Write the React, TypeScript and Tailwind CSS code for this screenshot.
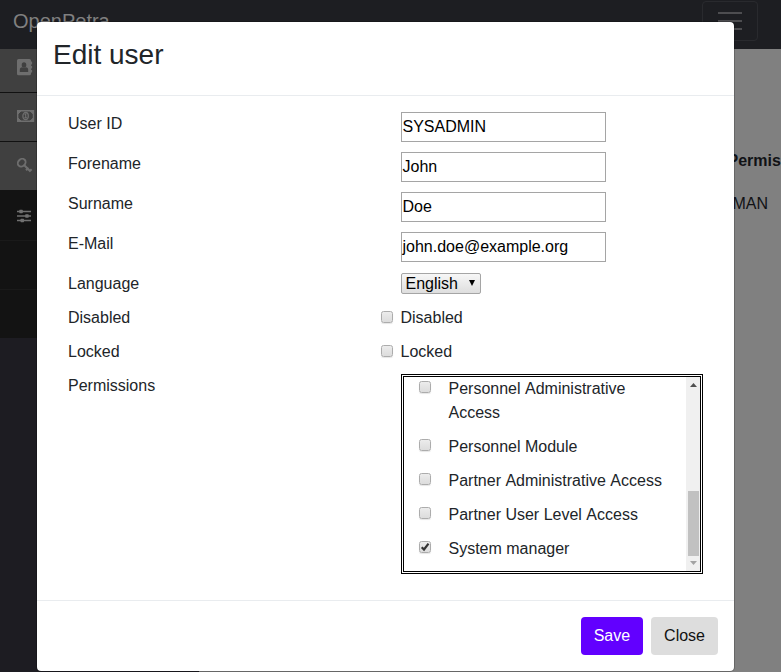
import React from "react";

function Check({ checked = false, className = "" }: { checked?: boolean; className?: string }) {
  return (
    <span
      className={`block size-3 shrink-0 rounded-[2.5px] border border-[#acacac] bg-linear-to-b from-[#ececec] to-[#dcdcdc] shadow-[0_1px_1px_rgba(0,0,0,0.1)] ${className}`}
    >
      {checked && (
        <svg viewBox="0 0 10 10" className="block size-[10px]">
          <path d="M1.7 5.2 4 7.5 8.5 1.6" fill="none" stroke="#333" strokeWidth="2.2" />
        </svg>
      )}
    </span>
  );
}

function BookIcon() {
  return (
    <svg width="16" height="17" viewBox="0 0 16 17">
      <path
        d="M1.6 0h10.8Q14 0 14 1.6V2.6h.6q.5 0 .5.5v1.8q0 .5-.5.5H14v1.3h.6q.5 0 .5.5V9q0 .5-.5.5H14v1.3h.6q.5 0 .5.5v1.8q0 .5-.5.5H14v1.1q0 1.6-1.6 1.6H1.6Q0 16.300 0 14.700V1.6Q0 0 1.6 0z"
        fill="#6e6e6e"
      />
      <ellipse cx="7" cy="6" rx="2.3" ry="2.700" fill="#404040" />
      <path d="M2.800 13v-2Q2.800 8.300 5.200 8.300q1.800 1 3.600 0Q11.200 8.300 11.200 11v2z" fill="#404040" />
    </svg>
  );
}

function MoneyIcon() {
  return (
    <svg width="18" height="12" viewBox="0 0 18 12" fill="none" stroke="#6e6e6e">
      <path d="M.7.7h15.800v10.600H.7z" strokeWidth="1.4" />
      <path d="M1 1h3L1 4zM16.200 1h-3l3 3zM1 11V8l3 3zM16.200 11V8l-3 3z" fill="#6e6e6e" />
      <ellipse cx="8.600" cy="6" rx="2.7" ry="3.500" strokeWidth="1.300" />
      <path d="M7.600 4.600l1.100-.7v3.900M7.300 7.800h2.700" strokeWidth="1.100" />
    </svg>
  );
}

function KeyIcon() {
  return (
    <svg width="16" height="16" viewBox="0 0 16 16" fill="none" stroke="#6e6e6e">
      <ellipse cx="4.700" cy="4.700" rx="4.200" ry="3.500" transform="rotate(-45 4.7 4.7)" strokeWidth="1.900" />
      <path d="M6.800 6.800 13.500 13.500M9 12.200l2.500-2.500M12.300 13.600l2.300-2.300" strokeWidth="2" />
    </svg>
  );
}

function SlidersIcon() {
  return (
    <svg width="14" height="14" viewBox="0 0 14 14" fill="#707070">
      <path d="M0 1.800h14v1.400H0zM0 6.300h14v1.400H0zM0 10.800h14v1.400H0z" />
      <rect x="2.300" y=".8" width="3.500" height="3.400" rx=".6" />
      <rect x="8.200" y="5.300" width="3.500" height="3.400" rx=".6" />
      <rect x="3.500" y="9.800" width="3.500" height="3.400" rx=".6" />
    </svg>
  );
}

const fields = [
  ["User ID", "SYSADMIN"],
  ["Forename", "John"],
  ["Surname", "Doe"],
  ["E-Mail", "john.doe@example.org"],
];

const permissions = [
  "Personnel Administrative Access",
  "Personnel Module",
  "Partner Administrative Access",
  "Partner User Level Access",
  "System manager",
];

function Backdrop() {
  return (
    <div className="flex h-full flex-col">
      <header className="flex h-[49px] shrink-0 items-start justify-between bg-[#1d1e22] pr-[23px] pl-[13px]">
        <span className="pt-[6px] text-[20px] leading-[30px] text-[#808080]">OpenPetra</span>
        <div className="mt-px flex h-10 w-14 flex-col items-center justify-center gap-[6px] rounded border border-[#292a2e]">
          <i className="h-0.5 w-6 bg-[#4d4d50]" />
          <i className="h-0.5 w-6 bg-[#4d4d50]" />
          <i className="h-0.5 w-6 bg-[#4d4d50]" />
        </div>
      </header>
      <div className="flex flex-1">
        <nav className="w-[199px] shrink-0 bg-[#1d1c22]">
          <div className="h-11 border-b border-[#111] bg-[#404040] pt-[10px] pl-[17px]"><BookIcon /></div>
          <div className="h-[49px] border-b border-[#111] bg-[#404040] pt-[17px] pl-[17px]"><MoneyIcon /></div>
          <div className="h-12 bg-[#404040] pt-4 pl-[17px]"><KeyIcon /></div>
          <div className="h-[51px] border-b border-[#1a1a1a] bg-[#131313] pt-[19px] pl-[17px]"><SlidersIcon /></div>
          <div className="h-[49px] border-b border-[#1a1a1a] bg-[#131313]" />
          <div className="h-12 bg-[#131313]" />
        </nav>
        <main className="flex min-w-0 flex-1 flex-col items-start overflow-hidden bg-[#808080] pt-[100px] pl-[528.5px] leading-6 whitespace-nowrap text-[#111215]">
          <span className="font-bold">Permissions</span>
          <span className="mt-[19px] pl-[5px]">MAN</span>
        </main>
      </div>
    </div>
  );
}

export default function App() {
  return (
    <div className="relative h-[672px] w-[781px] overflow-hidden font-['Liberation_Sans',Arial,sans-serif] text-base text-[#212529]">
      <Backdrop />
      <div
        role="dialog"
        className="absolute top-[21px] left-[36px] flex h-[651px] w-[699px] flex-col rounded-[5px] border border-black/20 bg-white bg-clip-padding"
      >
        <div className="h-[74px] shrink-0 border-b border-[#e9ecef] px-4 pt-[15px]">
          <h5 className="text-[28px] leading-[36px]">Edit user</h5>
        </div>
        <div className="flex h-[504px] shrink-0 flex-col pt-4 pl-[31px] leading-6">
          {fields.map(([label, value]) => (
            <div key={label} className="flex h-10">
              <label className="w-[333px]">{label}</label>
              <div className="h-[30px] w-[205px] border border-[#a5a5a5] pl-[0.5px] leading-7 text-black">{value}</div>
            </div>
          ))}
          <div className="flex h-[34px]">
            <label className="w-[333px]">Language</label>
            <div className="mt-px flex h-[21px] w-20 items-center justify-between rounded-[2px] border border-[#a5a5a5] bg-linear-to-b from-[#f7f7f7] to-[#dedede] pr-[5px] pl-[3.5px] leading-[19px] text-black">
              English
              <svg width="6" height="6" viewBox="0 0 6 6" className="-mt-px"><path d="M0 0h6L3 6z" /></svg>
            </div>
          </div>
          {["Disabled", "Locked"].map((label) => (
            <div key={label} className="flex h-[34px]">
              <label className="w-[313px]">{label}</label>
              <Check className="mt-[5px] mr-[7.5px]" />
              <span>{label}</span>
            </div>
          ))}
          <div className="flex">
            <label className="w-[333px]">Permissions</label>
            <div className="flex h-[200px] w-[302px] border-[3px] border-double border-black">
              <div className="flex flex-1 flex-col gap-[10px] pl-[15px] [font-kerning:none]">
                {permissions.map((label) => (
                  <div key={label} className="flex">
                    <Check checked={label === "System manager"} className="mt-1 mr-[17.5px]" />
                    <span className="w-[220px]">{label}</span>
                  </div>
                ))}
              </div>
              <div className="flex w-[14px] shrink-0 flex-col items-start bg-[#f0f0f0]">
                <svg width="7" height="4" viewBox="0 0 7 4" className="mt-[6px] ml-1"><path d="M0 4 3.5 0 7 4z" fill="#505050" /></svg>
                <div className="mt-[104px] ml-0.5 h-[65px] w-[11px] bg-[#c1c1c1]" />
                <svg width="7" height="4" viewBox="0 0 7 4" className="mt-[5px] ml-1"><path d="M0 0h7L3.5 4z" fill="#a3a3a3" /></svg>
              </div>
            </div>
          </div>
        </div>
        <div className="flex flex-1 items-start justify-end gap-2 border-t border-[#e9ecef] px-4 pt-4">
          <button className="h-[38px] rounded bg-[#6200ff] px-[13px] text-white">Save</button>
          <button className="h-[38px] rounded bg-[#dddddd] px-[13px] text-[#111]">Close</button>
        </div>
      </div>
    </div>
  );
}
